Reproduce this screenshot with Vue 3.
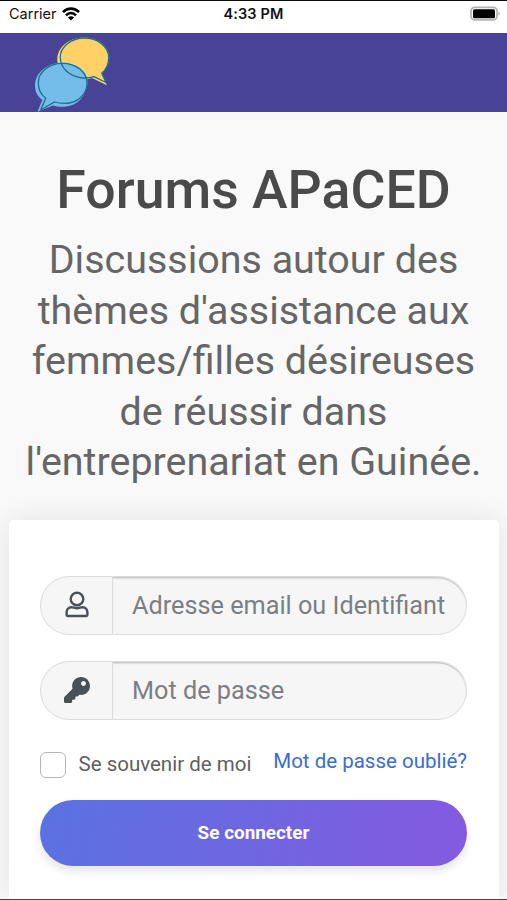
<script setup>
import { ref } from 'vue'

const identifier = ref('')
const password = ref('')
const remember = ref(false)
const intro = [
  'Discussions autour des',
  "thèmes d'assistance aux",
  'femmes/filles désireuses',
  'de réussir dans',
  "l'entreprenariat en Guinée.",
]
</script>

<template>
  <div class="screen">
    <div class="status">
      <div class="carrier">
        <span>Carrier</span>
        <svg class="wifi" viewBox="0 0 18 14" width="18" height="14">
          <g fill="none" stroke="#000" stroke-width="2.6">
            <path d="M1 5.1C5.5.4 12.500.4 17 5.100" />
            <path d="M4 8.300c2.900-3 7.100-3 10 0" />
          </g>
          <path d="M9 13.600 5.900 10.500c1.700-1.700 4.500-1.700 6.200 0z" />
        </svg>
      </div>
      <div class="clock">4:33 PM</div>
      <svg class="battery" viewBox="0 0 32 16" width="32" height="16">
        <rect x="2" y="1.300" width="26" height="12.600" rx="3.800" fill="#fff" stroke="#b4b4b4" stroke-width="1.700" />
        <rect x="4" y="3.200" width="22" height="9" rx="1.500" />
        <path d="M29.400 5.400c2 .8 2 3.600 0 4.400z" fill="#b4b4b4" />
      </svg>
    </div>

    <header class="bar">
      <svg class="logo" viewBox="0 -0.5 78 76" width="78" height="76">
        <path fill="#ffd166" d="M49.300 1C63 1 74.200 10 74.200 21c0 6.500-3 12-7.200 15.800l4.800 11.900L57 41.500c-3.500 1-7.500 1.700-12 1.600C32 42.500 22.300 34 22.300 23.500 22.300 10.500 34 1 49.300 1z" />
        <path fill="#74bdea" d="M27.300 26.300c14 0 25.200 8 25.200 18.200C52.500 58 43 69.700 29 70.300c-4 .2-8-.3-11-1.300L2.500 75.200 7.300 63.500C2.500 60 0 55 0 49.500c0-13 12-23.200 27.300-23.200z" />
        <g fill="none" stroke="#18718e" stroke-width="1.300" stroke-linejoin="round">
          <path d="M49.300 1.500C62.500 1.500 73.700 10 73.700 21c0 6.500-2.500 12-7 15.800L71 46l-12-5.800c-3.500 1-8 1.600-12.500 1.100C34.500 40 25.300 31.500 25.300 20.700c0-10.500 11-19.200 24-19.200z" />
          <path d="M27.300 26.800C41 26.800 52 35.500 52 46.500 52 58 42.500 66.800 30 66.800c-4 0-7.500-.3-10.700-1.300L5.700 73.500l5-11.700C6 58 3.300 52.500 3.300 46.500c0-11 10.700-19.700 24-19.700z" />
        </g>
      </svg>
    </header>

    <main>
      <h1><span>Forums APaCED</span></h1>
      <p class="intro">
        <span v-for="line in intro" :key="line">{{ line }}</span>
      </p>

      <form class="card" @submit.prevent>
        <label class="field">
          <span class="addon">
            <svg viewBox="0 0 24 28" width="24" height="28" fill="none" stroke="#495057" stroke-width="2.400">
              <circle cx="12" cy="8" r="6.300" />
              <path stroke-linejoin="round" d="M6.600 16.300c1.900 0 3 .9 5.400.9s3.500-.9 5.400-.9c3.300 0 5 2.500 5 5.300v1.900c0 .9-.6 1.500-1.500 1.500H3.100c-.9 0-1.500-.6-1.500-1.500v-1.900c0-2.800 1.700-5.300 5-5.300z" />
            </svg>
          </span>
          <input v-model="identifier" type="text" placeholder="Adresse email ou Identifiant" />
        </label>

        <label class="field">
          <span class="addon">
            <svg viewBox="0 0 512 512" width="26" height="26" fill="#495057">
              <path d="M512 176.001C512 273.203 433.202 352 336 352c-11.220 0-22.190-1.062-32.827-3.069l-24.012 27.014A23.999 23.999 0 0 1 261.223 384H224v40c0 13.255-10.745 24-24 24h-40v40c0 13.255-10.745 24-24 24H24c-13.255 0-24-10.745-24-24v-78.059c0-6.365 2.529-12.470 7.029-16.971l161.802-161.802C163.108 213.814 160 195.271 160 176 160 78.798 238.797.001 335.999 0 433.488-.001 512 78.511 512 176.001zM336 128c0 26.510 21.490 48 48 48s48-21.490 48-48-21.490-48-48-48-48 21.490-48 48z" />
            </svg>
          </span>
          <input v-model="password" type="password" placeholder="Mot de passe" />
        </label>

        <div class="options">
          <label class="remember">
            <input v-model="remember" type="checkbox" />
            <span>Se souvenir de moi</span>
          </label>
          <a href="#">Mot de passe oublié?</a>
        </div>

        <button type="submit">Se connecter</button>
      </form>
    </main>
  </div>
</template>

<style>
body {
  margin: 0;
}
</style>

<style scoped>
* {
  box-sizing: border-box;
}
.screen {
  display: flex;
  flex-direction: column;
  width: 507px;
  height: 900px;
  overflow: hidden;
  background: #f9f9f9;
  border-top: 1.500px solid #0b0b0b;
  border-bottom: 1px solid #444;
  font-family: Roboto, sans-serif;
}
.status {
  display: grid;
  grid-template-columns: 1fr auto 1fr;
  align-items: center;
  flex: none;
  height: 32px;
  padding: 0 6px 6px 9px;
  background: #fff;
  color: #111;
  font: 14.500px/26px Inter, sans-serif;
}
.carrier {
  display: flex;
  align-items: center;
  gap: 5px;
}
.clock {
  margin-right: 3px;
  font-weight: 600;
  letter-spacing: 0.150px;
}
.battery {
  justify-self: end;
}
.bar {
  flex: none;
  height: 79px;
  padding: 3px 0 0 35px;
  background: #494396;
}
.logo {
  display: block;
}
main {
  display: flex;
  flex-direction: column;
  flex: 1;
}
h1 {
  margin: 48px 0 0;
  color: #4a4a4a;
  font-size: 53.600px;
  font-weight: 500;
  line-height: 60px;
  text-align: center;
  white-space: nowrap;
}
.intro {
  display: flex;
  flex-direction: column;
  align-items: center;
  margin: 15px 0 0;
  color: #666;
  font-size: 39.450px;
  line-height: 50.600px;
  white-space: nowrap;
}
.card {
  display: flex;
  flex-direction: column;
  flex: 1;
  margin: 32px 8px 0 9px;
  padding: 56px 32px 0 31px;
  border-radius: 5px 5px 0 0;
  background: #fff;
  box-shadow: 0 0 32px rgba(0, 0, 0, 0.090);
}
.field {
  display: flex;
  flex: none;
  height: 59px;
  margin-bottom: 26px;
}
.addon {
  display: flex;
  align-items: center;
  justify-content: center;
  width: 72px;
  border: 1px solid #dcdcdc;
  border-right: 0;
  border-radius: 30px 0 0 30px;
  background: #f6f6f6;
}
.field input {
  flex: 1;
  min-width: 0;
  padding: 1px 0 0 19px;
  border: 1px solid #dcdcdc;
  border-radius: 0 30px 30px 0;
  outline: 0;
  background: #f6f6f6;
  box-shadow: inset 0 2px 1px -0.5px #c8c8c8;
  color: #495057;
  font: 25.250px Roboto, sans-serif;
}
.field input::placeholder {
  color: #7b7f83;
  opacity: 1;
}
.options {
  display: flex;
  justify-content: space-between;
  flex: none;
  height: 54px;
  color: #5f5f5f;
  font-size: 20.500px;
  line-height: 24px;
  white-space: nowrap;
}
.remember {
  display: flex;
  align-items: center;
  gap: 12.500px;
  height: 37px;
}
.remember input {
  appearance: none;
  width: 26px;
  height: 26px;
  margin: 2px 0 0;
  border: 1.500px solid #b4b8ba;
  border-radius: 6px;
  background: #fff;
}
.options a {
  padding-top: 3px;
  color: #3b6bd3;
  text-decoration: none;
}
button {
  flex: none;
  height: 66px;
  border: 0;
  border-radius: 33px;
  background: linear-gradient(100deg, #5a72e2, #845adf);
  box-shadow: 0 5px 8px rgba(0, 0, 0, 0.110);
  color: #fff;
  font: 700 18.900px Roboto, sans-serif;
}
</style>
